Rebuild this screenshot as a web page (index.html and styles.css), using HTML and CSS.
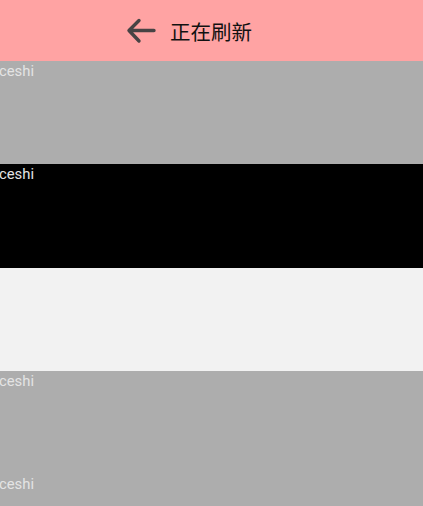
FILE: index.html
```html
<!DOCTYPE html>
<html>
<head>
<meta charset="utf-8">
<link rel="stylesheet" href="styles.css">
</head>
<body>
<div class="page">
  <header class="bar">
    <svg class="back" width="30" height="28" viewBox="0 0 30 28">
      <path d="M28 13.5H3.5M13 3.5L3 13.5L13 24" fill="none" stroke="#474344" stroke-width="3.4" stroke-linecap="round" stroke-linejoin="round"/>
    </svg>
    <span class="title">正在刷新</span>
  </header>
  <div class="row gray"><span class="label">ceshi</span></div>
  <div class="row black"><span class="label">ceshi</span></div>
  <div class="row light"></div>
  <div class="row gray"><span class="label">ceshi</span></div>
  <div class="row gray"><span class="label">ceshi</span></div>
</div>
</body>
</html>
```
FILE: styles.css
```css
html, body {
  margin: 0;
  padding: 0;
  overflow: hidden;
}
body {
  font-family: Roboto, "Noto Sans", "Noto Sans CJK SC", sans-serif;
}
.page {
  width: 423px;
  height: 506px;
  display: flex;
  flex-direction: column;
  overflow: hidden;
}
.bar {
  flex: 0 0 61px;
  height: 61px;
  background: #ffa3a3;
  display: flex;
  align-items: center;
  padding-left: 126px;
  box-sizing: border-box;
}
.back {
  display: block;
  margin-top: 1px;
}
.title {
  margin-left: 14px;
  font-family: "Noto Sans CJK SC", sans-serif;
  font-size: 20.5px;
  color: #111;
  line-height: 24px;
}
.row {
  flex: 0 0 103.3px;
  height: 103.3px;
  box-sizing: border-box;
}
.gray { background: #adadad; }
.black { background: #000; }
.light { background: #f2f2f2; }
.label {
  display: block;
  margin-left: -1px;
  font-size: 14.8px;
  line-height: 18px;
  padding-top: 1px;
  color: #e4e4e4;
}
```
